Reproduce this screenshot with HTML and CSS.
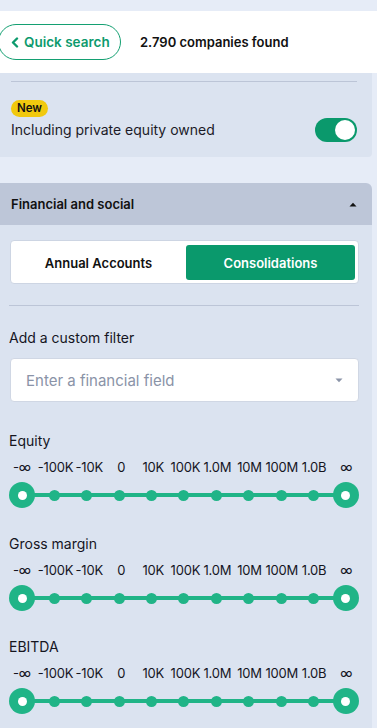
FILE: index.html
```html
<!DOCTYPE html>
<html>
<head>
<meta charset="utf-8">
<link rel="stylesheet" href="styles.css">
</head>
<body>
<div class="page">
  <header class="header">
    <button class="quick-btn">
      <svg class="chev" width="8" height="11" viewBox="0 0 8 11"><path d="M6 1.5 L2 5.5 L6 9.5" fill="none" stroke="#0c9a6d" stroke-width="2.4" stroke-linecap="round" stroke-linejoin="round"/></svg>
      <span>Quick search</span>
    </button>
    <span class="found">2.790 companies found</span>
  </header>

  <section class="pe-panel">
    <div class="rule"></div>
    <div class="pe-row">
      <div class="pe-text">
        <span class="badge">New</span>
        <div class="pe-label">Including private equity owned</div>
      </div>
      <div class="toggle"><div class="knob"></div></div>
    </div>
  </section>

  <section class="fin">
    <div class="fin-head">
      <span>Financial and social</span>
      <svg width="8" height="5" viewBox="0 0 8 5"><path d="M0.5 4.5 L4 0.8 L7.5 4.5 Z" fill="#111"/></svg>
    </div>
    <div class="fin-body">
      <div class="seg">
        <div class="seg-item first">Annual Accounts</div>
        <div class="seg-item active">Consolidations</div>
      </div>
      <div class="rule2"></div>
      <div class="custom-label">Add a custom filter</div>
      <div class="select">
        <span>Enter a financial field</span>
        <svg width="8" height="5" viewBox="0 0 8 5"><path d="M0.5 0.5 L4 4.2 L7.5 0.5 Z" fill="#8b94a8"/></svg>
      </div>

      <div class="metric">
        <div class="metric-title">Equity</div>
        <div class="scale labels">
          <span>-∞</span><span>-100K</span><span>-10K</span><span>0</span><span>10K</span><span>100K</span><span>1.0M</span><span>10M</span><span>100M</span><span>1.0B</span><span>∞</span>
        </div>
        <div class="scale track">
          <i class="handle"></i><i class="dot"></i><i class="dot"></i><i class="dot"></i><i class="dot"></i><i class="dot"></i><i class="dot"></i><i class="dot"></i><i class="dot"></i><i class="dot"></i><i class="handle"></i>
        </div>
      </div>

      <div class="metric">
        <div class="metric-title">Gross margin</div>
        <div class="scale labels">
          <span>-∞</span><span>-100K</span><span>-10K</span><span>0</span><span>10K</span><span>100K</span><span>1.0M</span><span>10M</span><span>100M</span><span>1.0B</span><span>∞</span>
        </div>
        <div class="scale track">
          <i class="handle"></i><i class="dot"></i><i class="dot"></i><i class="dot"></i><i class="dot"></i><i class="dot"></i><i class="dot"></i><i class="dot"></i><i class="dot"></i><i class="dot"></i><i class="handle"></i>
        </div>
      </div>

      <div class="metric">
        <div class="metric-title">EBITDA</div>
        <div class="scale labels">
          <span>-∞</span><span>-100K</span><span>-10K</span><span>0</span><span>10K</span><span>100K</span><span>1.0M</span><span>10M</span><span>100M</span><span>1.0B</span><span>∞</span>
        </div>
        <div class="scale track">
          <i class="handle"></i><i class="dot"></i><i class="dot"></i><i class="dot"></i><i class="dot"></i><i class="dot"></i><i class="dot"></i><i class="dot"></i><i class="dot"></i><i class="dot"></i><i class="handle"></i>
        </div>
      </div>
    </div>
  </section>
</div>
</body>
</html>
```

FILE: styles.css
```css
* { box-sizing: border-box; }
html, body { margin: 0; padding: 0; }
body {
  background: #e6ecf7;
  font-family: Inter, "Noto Sans", sans-serif;
  color: #16161f;
  width: 377px;
  height: 728px;
  overflow: hidden;
}
.page { padding-top: 11px; }

.header {
  background: #ffffff;
  height: 62px;
  display: flex;
  align-items: center;
}
.quick-btn {
  margin-left: -2px;
  height: 36px;
  width: 123px;
  border: 1.3px solid #14a072;
  border-radius: 18px;
  background: #fff;
  display: flex;
  align-items: center;
  gap: 5px;
  padding: 0 0 0 12px;
  font-family: inherit;
  font-size: 13.5px;
  font-weight: 600;
  color: #0c9a6d;
  cursor: pointer;
}
.chev { display: block; }
.found {
  margin-left: 19px;
  font-size: 13px;
  font-weight: 600;
  color: #111;
}

.pe-panel {
  width: 372px;
  background: #dbe3f0;
  border-bottom-right-radius: 4px;
  padding: 8px 15px 18px 11px;
}
.rule { height: 1px; background: #bcc5d7; }
.pe-row {
  display: flex;
  justify-content: space-between;
  align-items: flex-end;
  margin-top: 18px;
}
.badge {
  display: block;
  width: fit-content;
  height: 17px;
  line-height: 17px;
  padding: 0 6px;
  border-radius: 9px;
  background: #f1c90e;
  font-size: 11.5px;
  font-weight: 600;
  color: #111;
}
.pe-label {
  margin-top: 4px;
  font-size: 14px;
  line-height: 18px;
  color: #1b1b28;
}
.toggle {
  width: 42px;
  height: 24px;
  border-radius: 12px;
  background: #0a996c;
  margin-bottom: -3px;
  display: flex;
  align-items: center;
  justify-content: flex-end;
  padding-right: 2px;
}
.knob {
  width: 20px;
  height: 20px;
  border-radius: 50%;
  background: #fff;
}

.fin { margin-top: 26px; width: 372px; }
.fin-head {
  height: 42px;
  background: #bdc6d8;
  border-top-right-radius: 6px;
  display: flex;
  align-items: center;
  justify-content: space-between;
  padding: 0 15px 0 11px;
  font-size: 13px;
  font-weight: 600;
  color: #111;
}
.fin-body {
  background: #dbe3f0;
  padding: 15px 13px 40px 9px;
}
.seg {
  margin-left: 1px;
  height: 44px;
  background: #fff;
  border: 1px solid #cdd5e3;
  border-radius: 4px;
  display: flex;
  padding: 4px 3px 3px 0;
}
.seg-item {
  flex: 1;
  display: flex;
  align-items: center;
  justify-content: center;
  font-size: 13px;
  font-weight: 600;
  color: #111;
  border-radius: 3px;
}
.seg-item.first { flex: 0 0 175px; }
.seg-item.active {
  background: #0a996c;
  color: #fff;
}
.rule2 { height: 1px; background: #bcc5d7; margin-top: 21px; }
.custom-label {
  margin-top: 22px;
  font-size: 14px;
  line-height: 20px;
  color: #15151f;
}
.select {
  margin-top: 10px;
  margin-left: 1px;
  height: 44px;
  background: #fff;
  border: 1px solid #d0d7e4;
  border-radius: 4px;
  display: flex;
  align-items: center;
  justify-content: space-between;
  padding: 0 15px 0 15px;
  font-size: 15px;
  color: #8a93a7;
}

.metric { margin-top: 29px; }
.metric + .metric { margin-top: 26px; }
.metric-title {
  font-size: 14px;
  line-height: 20px;
  color: #15151f;
}
.scale {
  display: grid;
  grid-template-columns: repeat(11, 1fr);
  margin: 0 -3.2px;
}
.labels {
  margin-top: 7px;
  font-size: 13px;
  line-height: 18px;
  letter-spacing: -0.2px;
  color: #15151f;
}
.labels span {
  justify-self: center;
  white-space: nowrap;
}
.track {
  margin-top: 6px;
  height: 26px;
  align-items: center;
  justify-items: center;
  background: linear-gradient(#20b487, #20b487) no-repeat center / calc(100% - 32.4px) 4px;
}
.handle {
  display: block;
  width: 26px;
  height: 26px;
  border-radius: 50%;
  background: #20b487;
  position: relative;
}
.handle::after {
  content: "";
  position: absolute;
  left: 8.5px;
  top: 8.5px;
  width: 9px;
  height: 9px;
  border-radius: 50%;
  background: #fff;
}
.dot {
  display: block;
  width: 11px;
  height: 11px;
  border-radius: 50%;
  background: #20b487;
}
```
